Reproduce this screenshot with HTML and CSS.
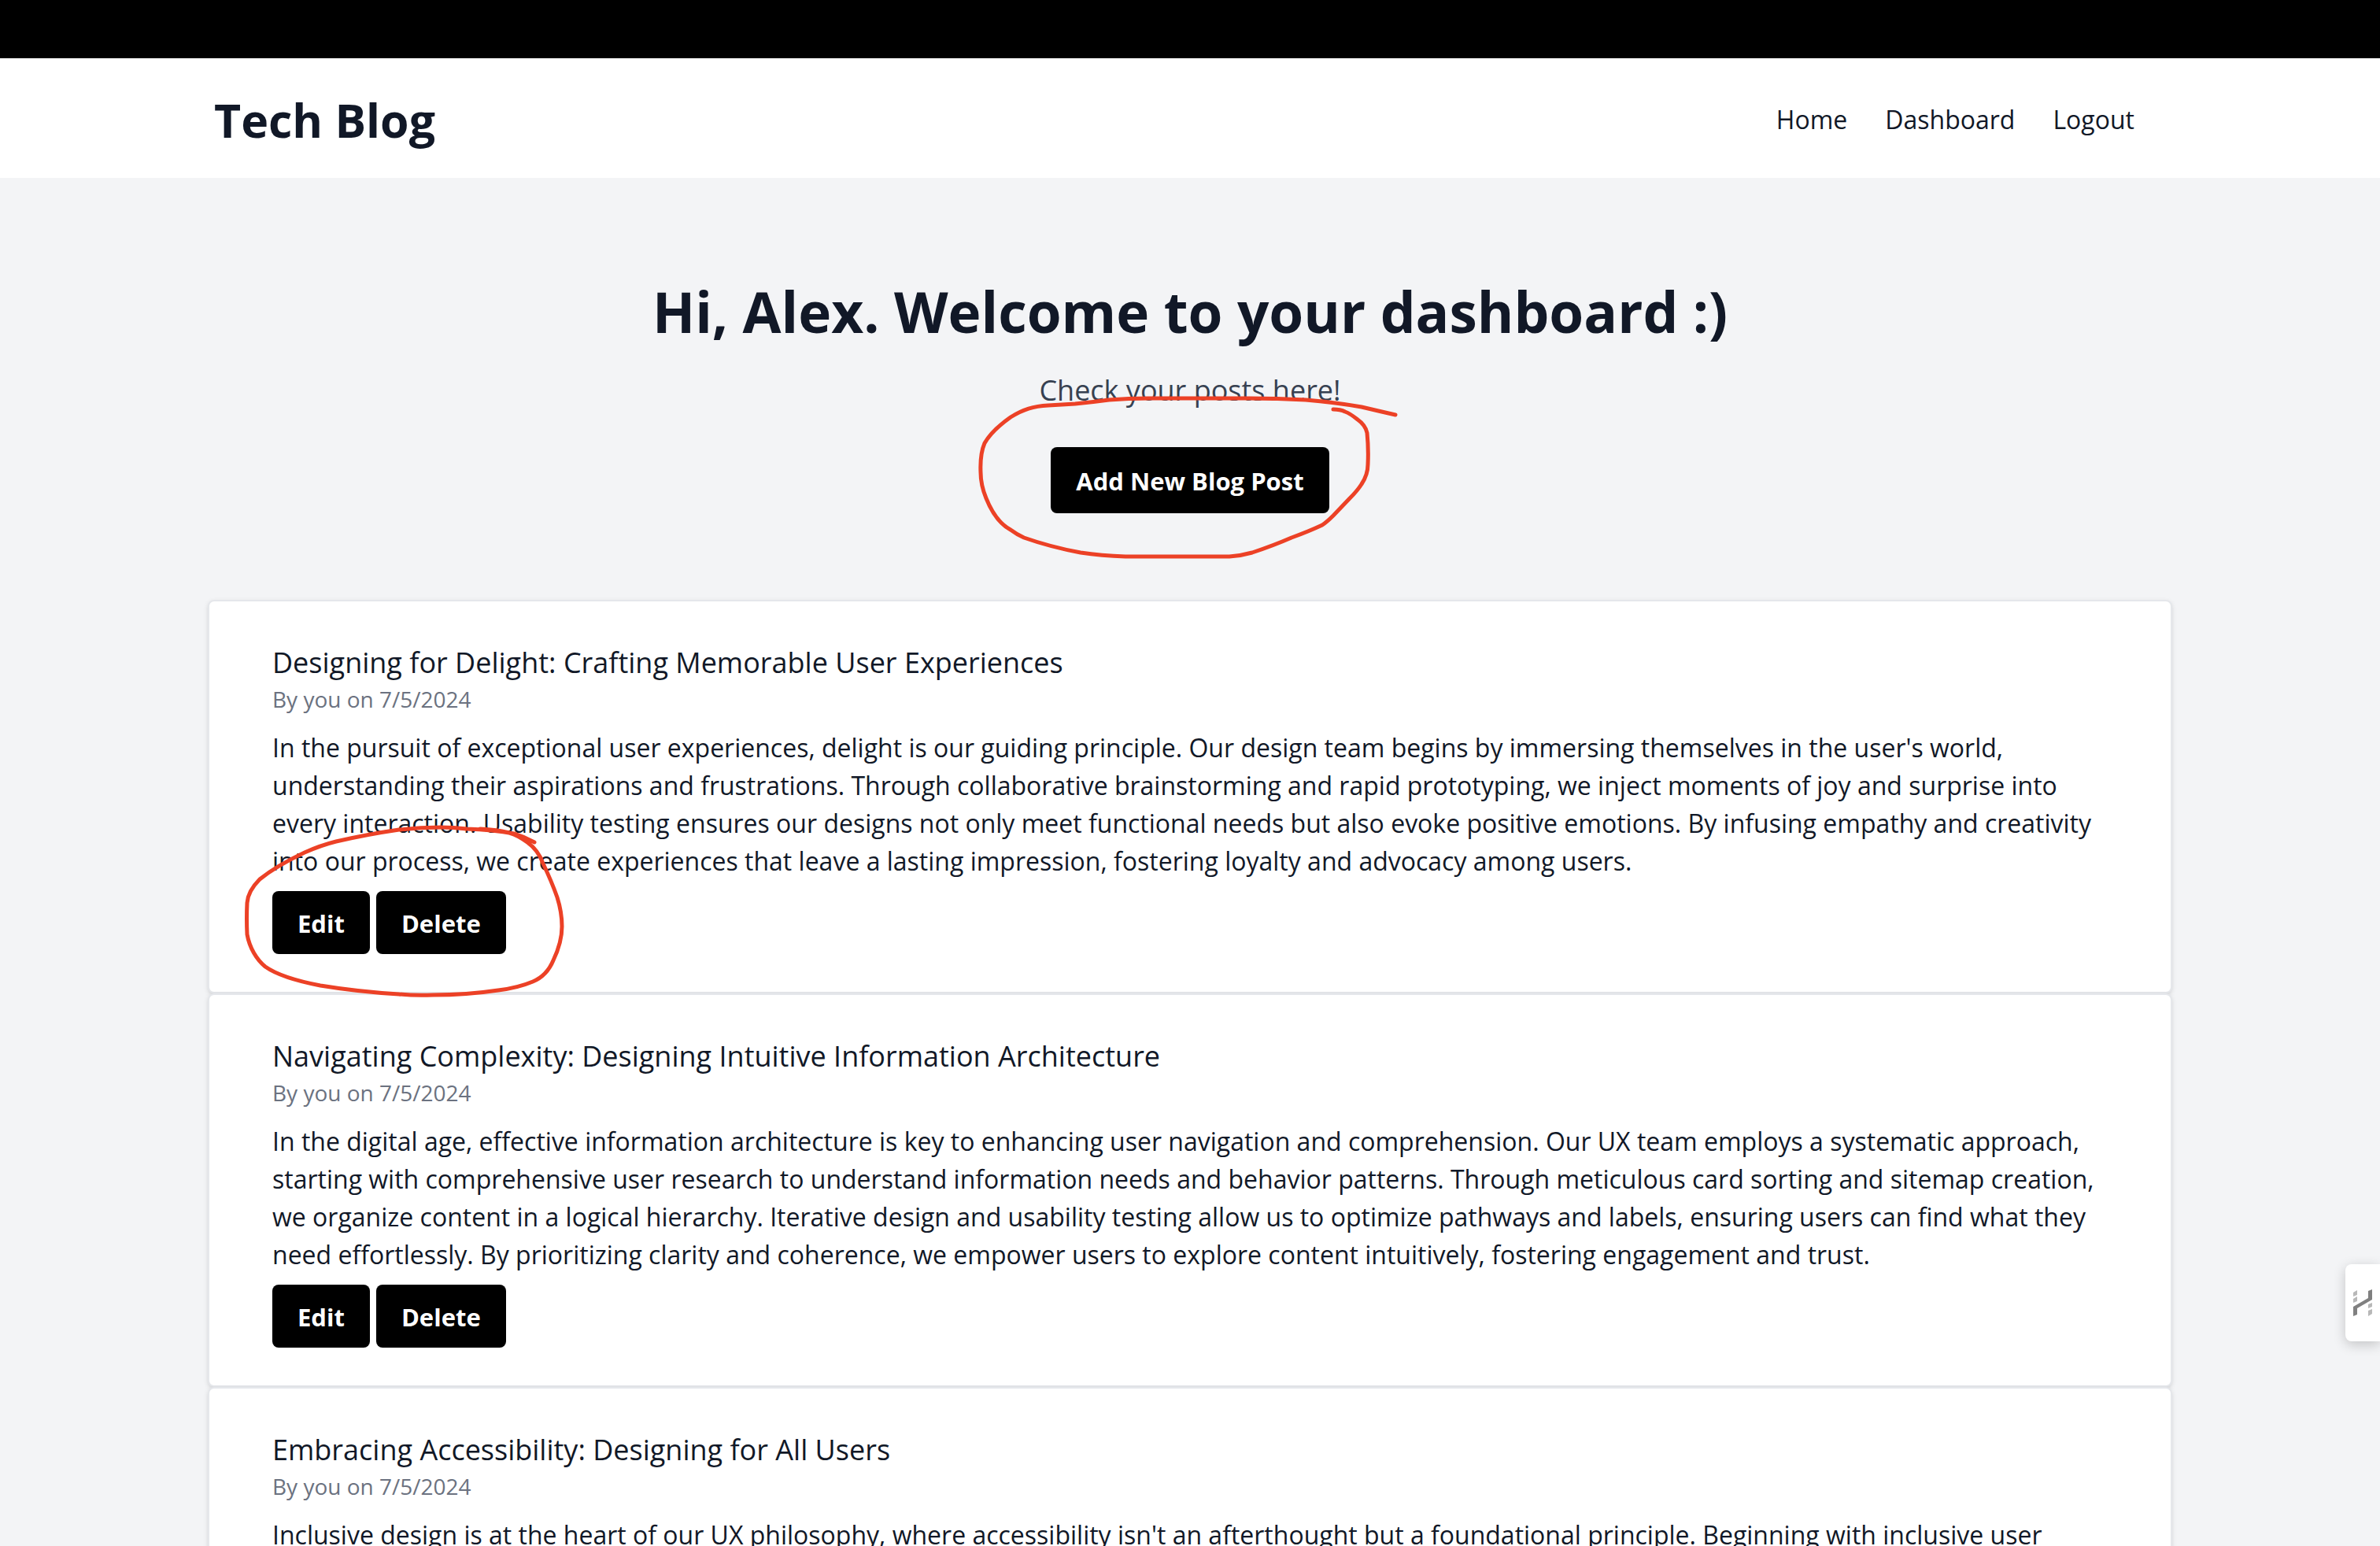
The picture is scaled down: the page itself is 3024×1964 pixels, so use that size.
FILE: index.html
```html
<!DOCTYPE html>
<html lang="en">
<head>
<meta charset="utf-8">
<title>Tech Blog</title>
<link rel="stylesheet" href="styles.css">
</head>
<body>
<div class="top-strip"></div>
<header class="site-header">
  <div class="container header-row">
    <a class="brand" href="#">Tech Blog</a>
    <nav class="nav">
      <a href="#">Home</a>
      <a href="#">Dashboard</a>
      <a href="#">Logout</a>
    </nav>
  </div>
</header>
<main class="container">
  <section class="hero">
    <h1 class="hero-title">Hi, Alex. Welcome to your dashboard :)</h1>
    <p class="hero-text">Check your posts here!</p>
    <div class="hero-action">
      <button class="btn btn-large" type="button">Add New Blog Post</button>
      <svg class="mark mark-hero" width="548" height="220" viewBox="0 0 548 220" aria-hidden="true">
        <path d="M538 27Q516 22 495 17C472 13 448 10 424 8Q388 6 352 6H224Q199 6 174 8Q152 11 131 13L97 15C78 16 65 20 49 30Q25 47 16 63Q10 77 11 100Q11 116 18 133C26 153 36 166 49 173Q57 179 66 183Q100 195 138 202Q164 206 195 207H327Q342 206 356 202C374 196 390 190 406 183Q428 175 445 167Q451 163 459 155L480 133Q490 123 495 115Q503 103 503 90Q504 70 502 50Q500 40 490 33Q480 25 474 23Q468 20 459 20"/>
      </svg>
    </div>
  </section>
  <article class="card">
    <h2 class="card-title">Designing for Delight: Crafting Memorable User Experiences</h2>
    <p class="card-meta">By you on 7/5/2024</p>
    <p class="card-body">In the pursuit of exceptional user experiences, delight is our guiding principle. Our design team begins by immersing themselves in the user's world, understanding their aspirations and frustrations. Through collaborative brainstorming and rapid prototyping, we inject moments of joy and surprise into every interaction. Usability testing ensures our designs not only meet functional needs but also evoke positive emotions. By infusing empathy and creativity into our process, we create experiences that leave a lasting impression, fostering loyalty and advocacy among users.</p>
    <div class="card-actions">
      <button class="btn" type="button">Edit</button>
      <button class="btn" type="button">Delete</button>
      <svg class="mark mark-card" width="420" height="232" viewBox="0 0 420 232" aria-hidden="true">
        <path d="M373 30Q360 23 347 19Q320 14 287 13Q270 11 254 11Q228 11 201 14Q160 20 121 29Q101 34 81 43Q45 60 24 77Q9 92 8 107Q7 127 8 147C11 164 20 179 31 188C48 200 75 207 101 212Q150 220 201 223Q222 225 244 224Q287 224 327 218Q352 215 371 207C383 202 392 192 397 180Q408 157 408 137Q408 119 402 100Q395 80 384 57Q378 40 364 30Q352 21 341 18Q326 14 304 13"/>
      </svg>
    </div>
  </article>
  <article class="card">
    <h2 class="card-title">Navigating Complexity: Designing Intuitive Information Architecture</h2>
    <p class="card-meta">By you on 7/5/2024</p>
    <p class="card-body">In the digital age, effective information architecture is key to enhancing user navigation and comprehension. Our UX team employs a systematic approach, starting with comprehensive user research to understand information needs and behavior patterns. Through meticulous card sorting and sitemap creation, we organize content in a logical hierarchy. Iterative design and usability testing allow us to optimize pathways and labels, ensuring users can find what they need effortlessly. By prioritizing clarity and coherence, we empower users to explore content intuitively, fostering engagement and trust.</p>
    <div class="card-actions">
      <button class="btn" type="button">Edit</button>
      <button class="btn" type="button">Delete</button>
    </div>
  </article>
  <article class="card">
    <h2 class="card-title">Embracing Accessibility: Designing for All Users</h2>
    <p class="card-meta">By you on 7/5/2024</p>
    <p class="card-body">Inclusive design is at the heart of our UX philosophy, where accessibility isn't an afterthought but a foundational principle. Beginning with inclusive user</p>
  </article>
</main>
<button class="side-tab" type="button" aria-label="Open side panel">
  <svg width="24" height="35" viewBox="0 0 24 35" aria-hidden="true">
    <path fill="#808080" d="M19 2L24 0V13L5 24V32L0 34V22L19 11Z"/>
    <path fill="#b8b8b8" d="M0 4L5 1V7L0 9ZM0 12L5 9V15L0 17ZM19 19L24 17V22L19 24ZM19 27L24 25V31L19 34Z"/>
  </svg>
</button>
</body>
</html>
```
FILE: styles.css
```css
* {
  box-sizing: border-box;
}

body {
  margin: 0;
  height: 100vh;
  overflow: hidden;
  background: #f3f4f6;
  color: #111827;
  font-family: "Open Sans", "Noto Sans", sans-serif;
  font-size: 32px;
  line-height: 48px;
}

h1, h2, p {
  margin: 0;
}

a {
  color: inherit;
  text-decoration: none;
}

.top-strip {
  height: 74px;
  background: #000;
}

.site-header {
  background: #fff;
}

.container {
  max-width: 2560px;
  margin: 0 auto;
  padding: 0 32px;
}

.header-row {
  display: flex;
  align-items: center;
  justify-content: space-between;
  padding: 38px 80px 34px 40px;
}

.brand {
  font-size: 59px;
  font-weight: 700;
  line-height: 80px;
}

.nav {
  display: flex;
  gap: 48px;
}

.hero {
  display: flex;
  flex-direction: column;
  align-items: center;
  padding: 126px 0 110px;
  text-align: center;
}

.hero-title {
  font-size: 71px;
  font-weight: 700;
  line-height: 88px;
}

.hero-text {
  margin: 28px 0 44px;
  color: #374151;
  font-size: 36px;
  line-height: 56px;
}

.hero-action,
.card-actions {
  position: relative;
}

.btn {
  padding: 17px 32px 15px;
  border: 0;
  border-radius: 8px;
  background: #000;
  color: #fff;
  font: inherit;
  font-size: 31px;
  font-weight: 700;
}

.btn-large {
  display: block;
  padding: 19px 32px 17px;
}

.mark {
  position: absolute;
  fill: none;
  stroke: #ec4126;
  stroke-width: 5;
  stroke-linecap: round;
  stroke-linejoin: round;
  pointer-events: none;
}

.mark-hero {
  top: -68px;
  left: 50%;
  margin-left: -277px;
}

.mark-card {
  top: -92px;
  left: -40px;
}

.card {
  padding: 52px 80px 48px;
  border: 2px solid #e5e7eb;
  border-radius: 8px;
  background: #fff;
  box-shadow: 0 2px 6px rgba(0, 0, 0, 0.1), 0 2px 4px -2px rgba(0, 0, 0, 0.1);
}

.card-title {
  font-size: 36px;
  font-weight: 500;
  line-height: 52px;
}

.card-meta {
  color: #6b7280;
  font-size: 28px;
  line-height: 40px;
}

.card-body {
  margin: 18px 0 14px;
}

.card-actions {
  display: flex;
  gap: 8px;
}

.side-tab {
  position: fixed;
  top: 1606px;
  right: 0;
  display: flex;
  align-items: center;
  width: 44px;
  height: 98px;
  padding: 0 10px;
  border: 0;
  border-radius: 8px 0 0 8px;
  background: #fff;
  box-shadow: 0 4px 16px rgba(0, 0, 0, 0.2);
}
```
